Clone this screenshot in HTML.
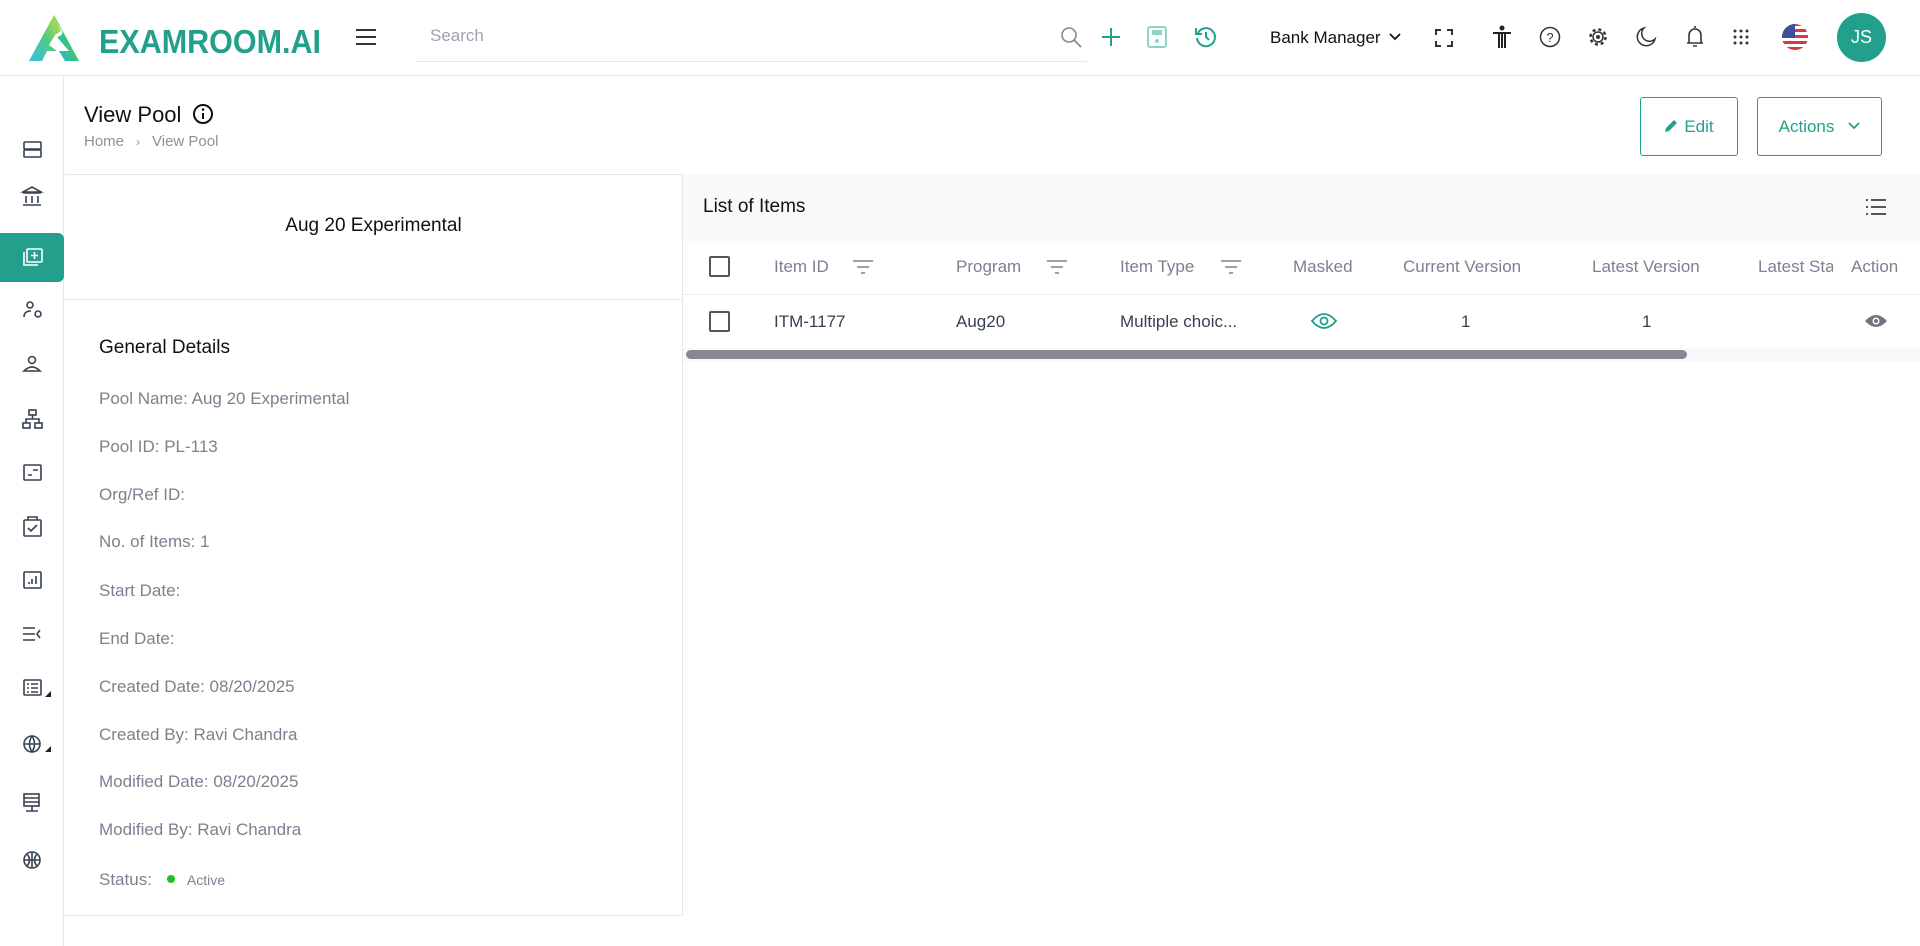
<!DOCTYPE html>
<html><head><meta charset="utf-8"><style>
*{box-sizing:border-box;margin:0;padding:0}
body{width:1920px;height:946px;overflow:hidden;background:#fff;font-family:"Liberation Sans",sans-serif;color:#111827;position:relative}
.abs{position:absolute}
.hdr{left:0;top:0;width:1920px;height:76px;border-bottom:1px solid #e5e7eb}
.ic{position:absolute;transform:translate(-50%,-50%)}
.side{left:0;top:77px;width:64px;height:869px;border-right:1px solid #e5e7eb}
.row{position:absolute;left:99px;font-size:17px;color:#7b8190}
.th{position:absolute;top:267px;font-size:17px;color:#7b8190;transform:translateY(-50%)}
.td{position:absolute;top:322px;font-size:17px;color:#374151;transform:translateY(-50%)}
.cb{position:absolute;width:21px;height:21px;border:2px solid #555;border-radius:2px}
</style></head><body>
<div class="abs hdr"></div>
<svg class="abs" style="left:29px;top:15px" width="50" height="46" viewBox="0 0 50 46">
<defs><linearGradient id="g" x1="0" y1="1" x2="1" y2="0"><stop offset="0" stop-color="#1fb6e8"/><stop offset=".5" stop-color="#3cc47a"/><stop offset="1" stop-color="#c8dc2a"/></linearGradient></defs>
<path d="M25 0 L50 46 L36 46 L30 36 L40 36 L28 22 Q36 20 32 14 L25 2 Z" fill="url(#g)"/>
<path d="M25 0 L0 46 L13 46 L18 36 L28 36 L20 30 L26 20 L32 16 Z" fill="url(#g)" opacity=".9"/>
</svg>
<svg class="abs" style="left:99px;top:20px" width="224" height="40"><text x="0" y="33" textLength="222" lengthAdjust="spacingAndGlyphs" font-family="Liberation Sans" font-weight="bold" font-size="33" fill="#22a08b">EXAMROOM.AI</text></svg>
<svg class="ic" style="left:366px;top:37px" width="22" height="18"><path d="M1 2H21M1 9H21M1 16H21" stroke="#333" stroke-width="2"/></svg>
<div class="abs" style="left:430px;top:26px;font-size:17px;color:#9ca3af">Search</div>
<div class="abs" style="left:416px;top:61px;width:671px;height:1px;background:#e5e7eb"></div>
<svg class="ic" style="left:1071px;top:37px" width="24" height="24"><circle cx="10" cy="10" r="7" fill="none" stroke="#888" stroke-width="1.6"/><path d="M15 15L22 22" stroke="#888" stroke-width="1.6"/></svg>
<svg class="ic" style="left:1111px;top:37px" width="20" height="20"><path d="M10 1V19M1 10H19" stroke="#22a08b" stroke-width="2"/></svg>
<svg class="ic" style="left:1157px;top:37px" width="20" height="22"><rect x="1" y="1" width="18" height="20" rx="2" fill="none" stroke="#8fd3c7" stroke-width="2"/><rect x="5" y="4" width="10" height="5" fill="#8fd3c7"/><circle cx="10" cy="15" r="2" fill="#8fd3c7"/></svg>
<svg class="ic" style="left:1206px;top:37px" width="24" height="24"><path d="M4 8A9 9 0 1 1 3 13" fill="none" stroke="#22a08b" stroke-width="2"/><path d="M2 3V9H8" fill="none" stroke="#22a08b" stroke-width="2"/><path d="M12 7V12L15 15" fill="none" stroke="#22a08b" stroke-width="2"/></svg>
<div class="abs" style="left:1270px;top:28px;font-size:17px;color:#111">Bank Manager</div>
<svg class="ic" style="left:1395px;top:37px" width="12" height="8"><path d="M1 1L6 6L11 1" fill="none" stroke="#111" stroke-width="1.8"/></svg>
<svg class="ic" style="left:1444px;top:38px" width="18" height="18"><path d="M1 6V1H6M12 1H17V6M17 12V17H12M6 17H1V12" fill="none" stroke="#333" stroke-width="2"/></svg>
<svg class="ic" style="left:1502px;top:37px" width="20" height="24"><circle cx="10" cy="3" r="2.5" fill="#222"/><path d="M1 8H19M10 8V23M7 8V23M13 8V23" stroke="#222" stroke-width="2"/></svg>
<svg class="ic" style="left:1550px;top:37px" width="22" height="22"><circle cx="11" cy="11" r="9.5" fill="none" stroke="#333" stroke-width="1.5"/><text x="11" y="16" font-size="13" text-anchor="middle" fill="#333" font-family="Liberation Sans">?</text></svg>
<svg class="ic" style="left:1598px;top:37px" width="22" height="22"><circle cx="11" cy="11" r="7.5" fill="none" stroke="#333" stroke-width="2.5" stroke-dasharray="3 2.9"/><circle cx="11" cy="11" r="5" fill="none" stroke="#333" stroke-width="1.5"/><circle cx="11" cy="11" r="2" fill="#333"/></svg>
<svg class="ic" style="left:1646px;top:37px" width="22" height="22"><path d="M9 2A9 9 0 1 0 20 13A7 7 0 0 1 9 2Z" fill="none" stroke="#333" stroke-width="1.5"/></svg>
<svg class="ic" style="left:1695px;top:37px" width="20" height="24"><path d="M4 18V10A6 6 0 0 1 16 10V18H4ZM2 18H18M10 1V3M8 21H12" fill="none" stroke="#333" stroke-width="1.6"/></svg>
<svg class="ic" style="left:1741px;top:37px" width="18" height="18"><g fill="#333"><circle cx="3" cy="3" r="1.5"/><circle cx="9" cy="3" r="1.5"/><circle cx="15" cy="3" r="1.5"/><circle cx="3" cy="9" r="1.5"/><circle cx="9" cy="9" r="1.5"/><circle cx="15" cy="9" r="1.5"/><circle cx="3" cy="15" r="1.5"/><circle cx="9" cy="15" r="1.5"/><circle cx="15" cy="15" r="1.5"/></g></svg>
<svg class="ic" style="left:1795px;top:37px" width="28" height="28"><defs><clipPath id="c"><circle cx="14" cy="14" r="13"/></clipPath></defs><g clip-path="url(#c)"><rect width="28" height="28" fill="#fff"/><g fill="#d8393e"><rect y="0" width="28" height="3"/><rect y="6" width="28" height="3"/><rect y="12" width="28" height="3"/><rect y="18" width="28" height="3"/><rect y="24" width="28" height="4"/></g><rect width="14" height="15" fill="#3e4fa0"/></g></svg>
<div class="abs" style="left:1837px;top:13px;width:49px;height:49px;border-radius:50%;background:#22a08b;color:#fff;font-size:18px;line-height:49px;text-align:center">JS</div>

<div class="abs side"></div>
<div class="abs" style="left:0;top:233px;width:64px;height:49px;background:#22a08b;border-radius:0 6px 6px 0"></div>
<svg class="abs" style="left:0;top:0" width="64" height="946" fill="none" stroke="#374151" stroke-width="1.6">
<rect x="24" y="142" width="17" height="7" rx="1"/><rect x="24" y="150" width="17" height="7" rx="1"/>
<path d="M23 192L32 187L41 192ZM23 193H41M26 196V203M32 196V203M38 196V203M23 205H41"/>
<g stroke="#fff"><rect x="27" y="249" width="15" height="13" rx="1"/><path d="M34.5 252V259M31 255.5H38M24 252V265H38"/></g>
<circle cx="30" cy="305" r="3"/><path d="M24 317Q24 311 31 311"/><circle cx="38" cy="314" r="3"/>
<circle cx="32" cy="360" r="3.5"/><path d="M24 371Q32 363 40 371Z"/>
<rect x="29" y="410" width="7" height="5"/><rect x="23" y="423" width="7" height="5"/><rect x="35" y="423" width="7" height="5"/><path d="M32.5 415V419M26 423V419H39V423"/>
<rect x="24" y="465" width="17" height="15" rx="1"/><path d="M28 475H32M33 470H38"/>
<rect x="24" y="520" width="17" height="16" rx="1"/><path d="M28 520V517H37V520M28 528L31 531L37 525"/>
<rect x="24" y="572" width="17" height="16" rx="1"/><path d="M29 584V582M32 584V579M36 584V576"/>
<path d="M23 628H35M23 634H35M23 640H35M40 630L37 634L40 638"/>
<rect x="24" y="680" width="17" height="15" rx="1"/><path d="M27 684H29M31 684H38M27 688H29M31 688H38M27 692H29M31 692H38"/>
<circle cx="32" cy="744" r="8"/><path d="M24 744H40M32 736Q27 744 32 752M32 736Q37 744 32 752"/>
<rect x="24" y="794" width="15" height="12"/><path d="M24 798H39M24 802H39M32 806V811M26 811H38"/>
<circle cx="32" cy="860" r="8"/><path d="M24 860H40M32 852V868M27 854Q32 860 27 866M37 854Q32 860 37 866"/>
</svg>
<svg class="abs" style="left:44px;top:690px" width="8" height="8"><path d="M7 1V7H1Z" fill="#222"/></svg>
<svg class="abs" style="left:44px;top:745px" width="8" height="8"><path d="M7 1V7H1Z" fill="#222"/></svg>

<div class="abs" style="left:84px;top:102px;font-size:22px;color:#111">View Pool</div>
<svg class="abs" style="left:192px;top:103px" width="22" height="22"><circle cx="11" cy="11" r="9" fill="none" stroke="#111" stroke-width="2"/><path d="M11 10V16" stroke="#111" stroke-width="2"/><circle cx="11" cy="6.5" r="1.3" fill="#111"/></svg>
<div class="abs" style="left:84px;top:133px;font-size:15px;color:#8a909c">Home<span style="margin:0 12px;font-size:12px">›</span>View Pool</div>
<div class="abs" style="left:1640px;top:97px;width:98px;height:59px;border:1px solid #22a08b;border-radius:3px;color:#22a08b;font-size:17px;line-height:57px;text-align:center">
<svg width="14" height="14" style="vertical-align:-1px;margin-right:6px"><path d="M1 13L2 9L10 1L13 4L5 12Z" fill="#22a08b"/></svg>Edit</div>
<div class="abs" style="left:1757px;top:97px;width:125px;height:59px;border:1px solid #22a08b;border-radius:3px;color:#22a08b;font-size:17px;line-height:57px;text-align:center">Actions<svg width="12" height="8" style="margin-left:14px;vertical-align:2px"><path d="M1 1L6 6L11 1" fill="none" stroke="#22a08b" stroke-width="1.8"/></svg></div>

<div class="abs" style="left:65px;top:174px;width:618px;height:742px;border:1px solid #e5e7eb;border-left:none"></div>
<div class="abs" style="left:65px;top:299px;width:617px;height:1px;background:#e5e7eb"></div>
<div class="abs" style="left:65px;top:215px;width:617px;text-align:center;font-size:19px;color:#111">Aug 20 Experimental</div>
<div class="abs" style="left:99px;top:337px;font-size:19px;color:#111">General Details</div>
<div class="row" style="top:389px">Pool Name: Aug 20 Experimental</div>
<div class="row" style="top:437px">Pool ID: PL-113</div>
<div class="row" style="top:485px">Org/Ref ID:</div>
<div class="row" style="top:532px">No. of Items: 1</div>
<div class="row" style="top:581px">Start Date:</div>
<div class="row" style="top:629px">End Date:</div>
<div class="row" style="top:677px">Created Date: 08/20/2025</div>
<div class="row" style="top:725px">Created By: Ravi Chandra</div>
<div class="row" style="top:772px">Modified Date: 08/20/2025</div>
<div class="row" style="top:820px">Modified By: Ravi Chandra</div>
<div class="row" style="top:870px">Status:<span style="display:inline-block;width:8px;height:8px;border-radius:50%;background:#22c01e;margin:0 12px 2px 15px"></span><span style="font-size:14px">Active</span></div>

<div class="abs" style="left:683px;top:174px;width:1237px;height:67px;background:#f8f9fb"></div>
<div class="abs" style="left:703px;top:196px;font-size:19px;color:#111">List of Items</div>
<svg class="abs" style="left:1866px;top:198px" width="20" height="18"><g fill="#555"><rect x="0" y="1" width="2" height="2"/><rect x="5" y="1" width="15" height="2"/><rect x="0" y="8" width="2" height="2"/><rect x="5" y="8" width="15" height="2"/><rect x="0" y="15" width="2" height="2"/><rect x="5" y="15" width="15" height="2"/></g></svg>
<div class="abs" style="left:683px;top:294px;width:1237px;height:1px;background:#eceef1"></div>
<div class="abs" style="left:683px;top:348px;width:1237px;height:14px;background:#f8f9fb"></div>
<div class="abs" style="left:686px;top:350px;width:1001px;height:9px;border-radius:5px;background:#868893"></div>
<div class="cb" style="left:709px;top:256px"></div>
<div class="cb" style="left:709px;top:311px"></div>
<div class="th" style="left:774px">Item ID</div>
<div class="th" style="left:956px">Program</div>
<div class="th" style="left:1120px">Item Type</div>
<div class="th" style="left:1293px">Masked</div>
<div class="th" style="left:1403px">Current Version</div>
<div class="th" style="left:1592px">Latest Version</div>
<div class="th" style="left:1758px;width:75px;overflow:hidden;white-space:nowrap">Latest Status</div>
<div class="th" style="left:1851px">Action</div>
<svg class="abs" style="left:852px;top:259px" width="22" height="16"><path d="M1 2H21M5 8H17M9 14H13" stroke="#7b8190" stroke-width="1.6"/></svg>
<svg class="abs" style="left:1046px;top:259px" width="22" height="16"><path d="M1 2H21M5 8H17M9 14H13" stroke="#7b8190" stroke-width="1.6"/></svg>
<svg class="abs" style="left:1220px;top:259px" width="22" height="16"><path d="M1 2H21M5 8H17M9 14H13" stroke="#7b8190" stroke-width="1.6"/></svg>
<div class="td" style="left:774px">ITM-1177</div>
<div class="td" style="left:956px">Aug20</div>
<div class="td" style="left:1120px">Multiple choic...</div>
<svg class="abs" style="left:1311px;top:312px" width="26" height="18"><path d="M1 9Q13 -5 25 9Q13 23 1 9Z" fill="none" stroke="#22a08b" stroke-width="1.8"/><circle cx="13" cy="9" r="3.5" fill="none" stroke="#22a08b" stroke-width="1.8"/></svg>
<div class="td" style="left:1461px">1</div>
<div class="td" style="left:1642px">1</div>
<svg class="abs" style="left:1864px;top:313px" width="24" height="16"><path d="M1 8Q12 -4 23 8Q12 20 1 8Z" fill="#707380"/><circle cx="12" cy="8" r="3.5" fill="#fff"/><circle cx="12" cy="8" r="2" fill="#707380"/></svg>
</body></html>
